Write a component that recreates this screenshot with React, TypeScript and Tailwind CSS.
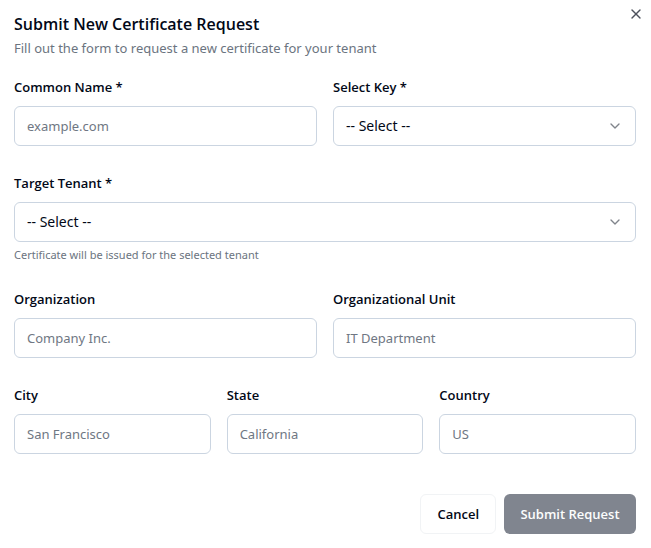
import { useId, useState } from "react";
import type { ReactNode } from "react";
import { ChevronDown, X } from "lucide-react";

const control =
  "h-10 w-full rounded-md border border-[#cbd5e1] bg-white px-3 leading-5 outline-none focus:border-slate-500";

function Label({ htmlFor, children }: { htmlFor: string; children: ReactNode }) {
  return (
    <label
      htmlFor={htmlFor}
      className="mb-3 block font-['Open_Sans','Noto_Sans',sans-serif] text-[13px] leading-[14px] font-semibold text-[#020817]"
    >
      {children}
    </label>
  );
}

function TextField({ label, placeholder }: { label: string; placeholder: string }) {
  const id = useId();
  return (
    <div className="min-w-0">
      <Label htmlFor={id}>{label}</Label>
      <input
        id={id}
        type="text"
        placeholder={placeholder}
        className={`${control} text-[13px] text-[#020817] placeholder:text-[#6f7783]`}
      />
    </div>
  );
}

function SelectField({ label, hint }: { label: string; hint?: string }) {
  const id = useId();
  return (
    <div className="min-w-0">
      <Label htmlFor={id}>{label}</Label>
      <div className="grid items-center">
        <select id={id} className={`${control} col-start-1 row-start-1 appearance-none text-[14px] text-[#020817]`}>
          <option>-- Select --</option>
        </select>
        <ChevronDown
          size={16}
          strokeWidth={2}
          className="pointer-events-none col-start-1 row-start-1 mr-[13px] justify-self-end text-[#80848b]"
        />
      </div>
      {hint && <p className="mt-[5px] text-[11px] leading-[15px] text-[#6b7480]">{hint}</p>}
    </div>
  );
}

export default function App() {
  const [open, setOpen] = useState(true);
  if (!open) return null;

  return (
    <section
      role="dialog"
      aria-labelledby="dialog-title"
      className="relative bg-white p-3.5 pr-[15px] font-['Noto_Sans','Open_Sans',sans-serif] text-[#020817]"
    >
      <button
        type="button"
        aria-label="Close"
        onClick={() => setOpen(false)}
        className="absolute top-1.5 right-[7px] text-[#4d515c]"
      >
        <X size={16} strokeWidth={2} />
      </button>

      <header>
        <h2
          id="dialog-title"
          className="font-['Open_Sans','Noto_Sans',sans-serif] text-[16px] leading-5 font-semibold"
        >
          Submit New Certificate Request
        </h2>
        <p className="mt-1 text-[13px] leading-5 text-[#6b7480]">
          Fill out the form to request a new certificate for your tenant
        </p>
      </header>

      <form className="mt-[22px]" onSubmit={(event) => event.preventDefault()}>
        <div className="flex flex-col gap-[30px]">
          <div className="grid grid-cols-2 gap-4">
            <TextField label="Common Name *" placeholder="example.com" />
            <SelectField label="Select Key *" />
          </div>
          <SelectField label="Target Tenant *" hint="Certificate will be issued for the selected tenant" />
          <div className="grid grid-cols-2 gap-4">
            <TextField label="Organization" placeholder="Company Inc." />
            <TextField label="Organizational Unit" placeholder="IT Department" />
          </div>
          <div className="grid grid-cols-3 gap-4">
            <TextField label="City" placeholder="San Francisco" />
            <TextField label="State" placeholder="California" />
            <TextField label="Country" placeholder="US" />
          </div>
        </div>

        <footer className="mt-10 flex justify-end gap-2 font-['Open_Sans','Noto_Sans',sans-serif]">
          <button
            type="button"
            onClick={() => setOpen(false)}
            className="h-10 rounded-md border border-[#f1f3f5] bg-white px-4 text-[13px] leading-5 font-semibold"
          >
            Cancel
          </button>
          <button
            type="submit"
            disabled
            className="h-10 min-w-[132px] rounded-md bg-[#80858f] px-4 text-[13px] leading-5 font-semibold text-[#fcfdfd]"
          >
            Submit Request
          </button>
        </footer>
      </form>
    </section>
  );
}
